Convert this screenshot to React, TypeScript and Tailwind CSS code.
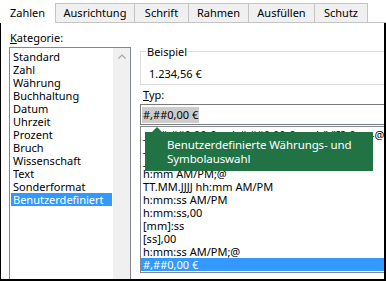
const categories = [
  "Standard",
  "Zahl",
  "Währung",
  "Buchhaltung",
  "Datum",
  "Uhrzeit",
  "Prozent",
  "Bruch",
  "Wissenschaft",
  "Text",
  "Sonderformat",
  "Benutzerdefiniert",
];

const formats = [
  "_-* #,##0,00 €_-;-* #,##0,00 €_-;_-* \"-\"?? €_-;_-@_-)",
  "_-* #,##0,00 €_-;[Rot]-#,##0,00 €",
  "_-* #,##0,00_-;-* #,##0,00_-",
  "h:mm AM/PM;@",
  "TT.MM.JJJJ hh:mm AM/PM",
  "h:mm:ss AM/PM",
  "h:mm:ss,00",
  "[mm]:ss",
  "[ss],00",
  "h:mm:ss AM/PM;@",
  "#,##0,00 €",
];

const tabs = [
  { label: "Ausrichtung", w: "w-[80px] border-l" },
  { label: "Schrift", w: "w-[54px]" },
  { label: "Rahmen", w: "w-[60px]" },
  { label: "Ausfüllen", w: "w-[66px]" },
  { label: "Schutz", w: "w-[53px]" },
];

export default function App() {
  return (
    <div className="relative h-[281px] w-[386px] overflow-hidden bg-white font-['Noto_Sans',sans-serif] text-[11px] text-black">
      {/* tab strip */}
      <div className="flex h-[23px] items-end">
        <div className="h-full w-[55px] pl-[10px] pt-[5px] leading-[16px]">Zahlen</div>
        {tabs.map((t) => (
          <div
            key={t.label}
            className={`${t.w} flex h-[20px] items-center justify-center border-r border-t border-b border-[#c4c4c4] bg-[#f0f0f0] leading-[16px]`}
          >
            {t.label}
          </div>
        ))}
        <div className="h-full flex-1 border-b border-[#c4c4c4]" />
      </div>

      {/* dialog body */}
      <div className="flex h-[258px] border-b-2 border-l border-r-2 border-black">
        <div className="ml-[8px] flex w-[122px] flex-col">
          <div className="mt-[8px] h-[13px] pl-[1px] leading-[13px]">
            <span className="underline">K</span>ategorie:
          </div>
          <div className="mt-[3px] flex flex-1 border border-b-0 border-[#828790]">
            <div className="w-[103px] pt-[2px]">
              {categories.map((c, i) => (
                <div
                  key={c}
                  className={`ml-[1px] h-[13px] w-[101px] pl-[2px] leading-[13px] ${
                    i === categories.length - 1 ? "bg-[#3399ff] text-white" : ""
                  }`}
                >
                  {c}
                </div>
              ))}
            </div>
            <div className="flex w-[17px] justify-center bg-[#f0f0f0] pt-[6px]">
              <svg width="8" height="5" viewBox="0 0 8 5">
                <path d="M0.5 4.5 L4 1 L7.5 4.5" fill="none" stroke="#a6a6a6" strokeWidth="1.2" />
              </svg>
            </div>
          </div>
        </div>

        <div className="ml-[9px] flex flex-1 flex-col overflow-hidden">
          <div className="relative mt-[28px] h-[34px] w-[270px] shrink-0 border border-[#dcdcdc]">
            <span className="absolute -top-[7px] left-[5px] bg-white px-[1px] leading-[13px]">Beispiel</span>
            <div className="pl-[8px] pt-[15px] leading-[13px]">1.234,56 €</div>
          </div>
          <div className="mt-[3px] h-[13px] pl-[3px] leading-[13px]">
            <span className="underline">T</span>yp:
          </div>
          <div className="mt-[3px] flex h-[21px] w-[270px] shrink-0 items-center border border-[#7a7a7a] pl-[1px]">
            <span className="h-[16px] bg-[#cccccc] pl-[1px] pr-[1px] leading-[16px]">#,##0,00 €</span>
          </div>
          <div className="mt-[1px] w-[270px] border border-[#828790] pt-[1px] pb-[1px]">
            {formats.map((f, i) => (
              <div
                key={f}
                className={`h-[13px] overflow-hidden whitespace-nowrap pl-[2px] leading-[13px] ${
                  i === formats.length - 1 ? "bg-[#3399ff] text-white" : ""
                }`}
              >
                {f}
              </div>
            ))}
          </div>
        </div>
      </div>

      {/* tooltip */}
      <div className="absolute left-[145px] top-[127px]">
        <svg width="20" height="5" viewBox="0 0 20 5" className="ml-[7px] block">
          <path d="M0 5 L5 0 L10 5 Z" fill="#217346" />
        </svg>
        <div className="h-[39px] w-[228px] whitespace-nowrap bg-[#217346] pl-[22px] pt-[6px] text-[11.5px] leading-[14px] tracking-[-0.1px] text-white">
          Benutzerdefinierte Währungs- und
          <br />
          Symbolauswahl
        </div>
      </div>
    </div>
  );
}
